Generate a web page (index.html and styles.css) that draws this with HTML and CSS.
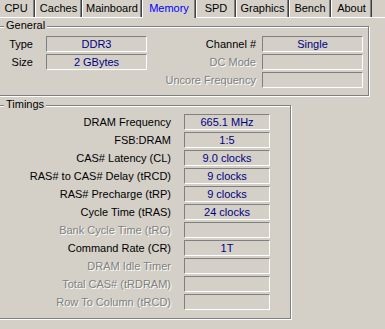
FILE: index.html
```html
<!DOCTYPE html>
<html lang="en">
<head>
    <meta charset="UTF-8">
    <title>Memory</title>
    <link rel="stylesheet" href="styles.css">
</head>
<body>
    <div class="tabs">
        <div class="tab tab-cpu">CPU</div>
        <div class="tab tab-caches">Caches</div>
        <div class="tab tab-mainboard">Mainboard</div>
        <div class="tab tab-memory active">Memory</div>
        <div class="tab tab-spd">SPD</div>
        <div class="tab tab-graphics">Graphics</div>
        <div class="tab tab-bench">Bench</div>
        <div class="tab tab-about">About</div>
    </div>

    <div class="page">
        <div class="group general">
            <span class="legend">General</span>
            <div class="general-grid">
                <span class="label label-left">Type</span>
                <span class="field">DDR3</span>
                <span class="label label-right">Channel #</span>
                <span class="field">Single</span>

                <span class="label label-left">Size</span>
                <span class="field">2 GBytes</span>
                <span class="label label-right disabled">DC Mode</span>
                <span class="field"></span>

                <span class="label label-left"></span>
                <span></span>
                <span class="label label-right disabled">Uncore Frequency</span>
                <span class="field"></span>
            </div>
        </div>

        <div class="group timings">
            <span class="legend">Timings</span>
            <div class="timings-grid">
                <span class="label">DRAM Frequency</span>
                <span class="field">665.1 MHz</span>
                <span class="label">FSB:DRAM</span>
                <span class="field">1:5</span>
                <span class="label">CAS# Latency (CL)</span>
                <span class="field">9.0 clocks</span>
                <span class="label">RAS# to CAS# Delay (tRCD)</span>
                <span class="field">9 clocks</span>
                <span class="label">RAS# Precharge (tRP)</span>
                <span class="field">9 clocks</span>
                <span class="label">Cycle Time (tRAS)</span>
                <span class="field">24 clocks</span>
                <span class="label disabled">Bank Cycle Time (tRC)</span>
                <span class="field"></span>
                <span class="label">Command Rate (CR)</span>
                <span class="field">1T</span>
                <span class="label disabled">DRAM Idle Timer</span>
                <span class="field"></span>
                <span class="label disabled">Total CAS# (tRDRAM)</span>
                <span class="field"></span>
                <span class="label disabled">Row To Column (tRCD)</span>
                <span class="field"></span>
            </div>
        </div>
    </div>
</body>
</html>
```

FILE: styles.css
```css
body {
    margin: 0;
    background-color: #d4d0c8;
    font-family: "Liberation Sans", Arial, sans-serif;
    font-size: 11px;
    color: #000;
    overflow: hidden;
    width: 385px;
    height: 329px;
}

/* tab strip */
.tabs {
    display: flex;
    height: 17px;
}
.tab {
    box-sizing: border-box;
    height: 17px;
    line-height: 17px;
    text-align: center;
    border-left: 1px solid #fff;
    border-right: 1px solid #404040;
    box-shadow: inset -1px 0 0 #808080;
    white-space: nowrap;
}
.tab-cpu {
    width: 38px;
    margin-left: -3px;
}
.tab-caches { width: 47px; }
.tab-mainboard { width: 60px; }
.tab-memory { width: 54px; }
.tab-spd { width: 40px; }
.tab-graphics { width: 53px; }
.tab-bench { width: 42px; }
.tab-about { width: 41px; }
.tab.active {
    color: #0000ff;
    height: 18px;
    position: relative;
    z-index: 1;
    background-color: #d4d0c8;
}

.page {
    border-top: 1px solid #fff;
}

/* etched group boxes */
.group {
    position: relative;
    box-sizing: border-box;
    margin-left: -3px;
    border: 1px solid #808080;
    box-shadow: 1px 1px 0 #fff, inset 1px 1px 0 #fff;
}
.general {
    width: 372px;
    height: 70px;
    margin-top: 8px;
}
.timings {
    width: 294px;
    height: 214px;
    margin-top: 9px;
}
.legend {
    position: absolute;
    top: -8px;
    left: 6px;
    padding: 0 2px;
    line-height: 13px;
    background-color: #d4d0c8;
}

.general-grid {
    display: grid;
    grid-template-columns: 48px 101px 115px 101px;
    grid-auto-rows: 16px;
    row-gap: 2px;
    padding-top: 9px;
}
.timings-grid {
    display: grid;
    grid-template-columns: 186px 86px;
    grid-auto-rows: 16px;
    row-gap: 2px;
    padding-top: 8px;
}

.label {
    text-align: right;
    line-height: 16px;
    white-space: nowrap;
    padding-right: 13px;
}
.general-grid .label-right {
    padding-right: 6px;
}
.label.disabled {
    color: #808080;
    text-shadow: 1px 1px 0 #fff;
}

.field {
    box-sizing: border-box;
    height: 16px;
    line-height: 14px;
    text-align: center;
    color: #000080;
    border: 1px solid;
    border-color: #808080 #fff #fff #808080;
    white-space: nowrap;
}
```
